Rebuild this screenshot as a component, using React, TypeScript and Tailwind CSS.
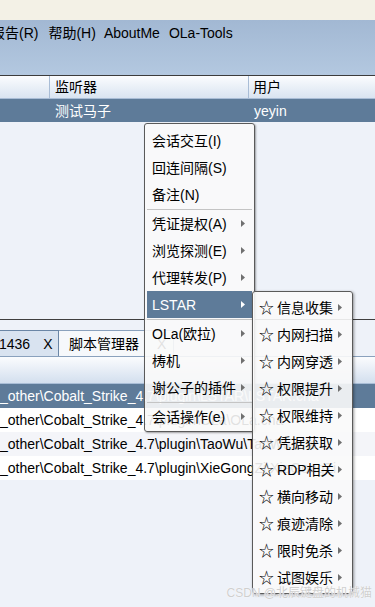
import React from "react";

const FONT = '"Liberation Sans", "Noto Sans CJK SC", sans-serif';

function Arrow({ white = false }: { white?: boolean }) {
  return (
    <svg width="4" height="7" viewBox="0 0 4 7" className="shrink-0">
      <path d="M0 0 L4 3.5 L0 7 Z" fill={white ? "#ffffff" : "#707070"} />
    </svg>
  );
}

type MainItem = { label: string; sub?: boolean; active?: boolean; sepBefore?: boolean };

const mainItems: MainItem[] = [
  { label: "会话交互(I)" },
  { label: "回连间隔(S)" },
  { label: "备注(N)" },
  { label: "凭证提权(A)", sub: true, sepBefore: true },
  { label: "浏览探测(E)", sub: true },
  { label: "代理转发(P)", sub: true },
  { label: "LSTAR", sub: true, active: true },
  { label: "OLa(欧拉)", sub: true, sepBefore: true },
  { label: "梼机", sub: true },
  { label: "谢公子的插件", sub: true },
  { label: "会话操作(e)", sub: true, sepBefore: true },
];

const subItems = [
  "信息收集",
  "内网扫描",
  "内网穿透",
  "权限提升",
  "权限维持",
  "凭据获取",
  "RDP相关",
  "横向移动",
  "痕迹清除",
  "限时免杀",
  "试图娱乐",
];

const rows = [
  "_other\\Cobalt_Strike_4.7\\plugin\\LSTAR\\LSTAR.cna",
  "_other\\Cobalt_Strike_4.7\\plugin\\OLa\\OLa.cna",
  "_other\\Cobalt_Strike_4.7\\plugin\\TaoWu\\TaoWu.cna",
  "_other\\Cobalt_Strike_4.7\\plugin\\XieGongZi\\XieGongZi.cna",
];

export default function App() {
  return (
    <div
      className="relative w-[375px] h-[607px] overflow-hidden bg-[#eef2f9] text-[14px] text-black"
      style={{ fontFamily: FONT }}
    >
      {/* top cream strip */}
      <div className="h-[20px] bg-[#f3f1e6]" />
      {/* menubar + toolbar */}
      <div className="h-[55px] bg-gradient-to-b from-[#a2b8d3] to-[#b3c8e0]">
        <div className="h-[26px] flex items-center -ml-[9px] leading-[20px] whitespace-nowrap">
          <span>报告(R)</span>
          <span className="ml-[10px]">帮助(H)</span>
          <span className="ml-[8px]">AboutMe</span>
          <span className="ml-[9px]">OLa-Tools</span>
        </div>
      </div>
      <div className="h-px bg-[#3c3c3c]" />
      {/* table header */}
      <div className="h-[23px] flex bg-gradient-to-b from-[#fbfcfe] to-[#d9e4f1] border-b border-[#a9bdd6] leading-[20px]">
        <div className="w-[50px] border-r border-[#a9bdd6]" />
        <div className="w-[199px] border-r border-[#a9bdd6] pl-[5px] flex items-center">监听器</div>
        <div className="flex-1 pl-[4px] flex items-center">用户</div>
      </div>
      {/* selected row */}
      <div className="h-[23px] flex bg-[#5e7b99] text-white leading-[20px]">
        <div className="w-[50px]" />
        <div className="w-[199px] pl-[5px] flex items-center">测试马子</div>
        <div className="flex-1 pl-[5px] flex items-center">yeyin</div>
      </div>
      {/* empty area */}
      <div className="h-[197px]" />
      <div className="h-px bg-[#3f3f3f]" />
      <div className="h-[10px]" />
      {/* tabs */}
      <div className="h-[27px] flex border-b border-[#8aa1bd] leading-[20px] whitespace-nowrap">
        <div className="w-[60px] flex items-center -ml-[1px] bg-[#d9e3f0] border-r border-t border-[#6b86a6]">
          <span>1436</span>
          <span className="ml-[13px]">X</span>
        </div>
        <div className="w-[115px] flex items-center pl-[10px] bg-[#f6f8fb] border-t border-r border-[#8aa1bd]">
          <span>脚本管理器</span>
          <span className="ml-[18px]">X</span>
        </div>
        <div className="flex-1" />
      </div>
      {/* second table header */}
      <div className="h-[27px] bg-gradient-to-b from-[#fbfcfe] to-[#d3dfee] border-b border-[#a9bdd6]" />
      {/* rows */}
      <div className="leading-[20px] whitespace-nowrap">
        {rows.map((r, i) => (
          <div
            key={i}
            className={
              "h-[24px] flex items-center " +
              (i === 0 ? "bg-[#5e7b99] text-white" : i === 2 ? "bg-[#f4f5f9]" : "bg-white")
            }
          >
            <div className="w-[340px] overflow-hidden">{r}</div>
          </div>
        ))}
      </div>

      {/* main popup menu */}
      <div className="absolute left-[144px] top-[123px] w-[111px] rounded-[3px] border border-[#5a5a5a] bg-[rgba(250,250,250,0.9)] pt-[3px] pb-[1px] px-[2px] shadow-[1px_1px_2px_rgba(0,0,0,0.35)] leading-[20px] whitespace-nowrap">
        {mainItems.map((it, i) => (
          <React.Fragment key={i}>
            {it.sepBefore && (
              <div className="h-[2px] flex flex-col justify-center">
                <div className="h-px bg-[#c4c4c4]" />
              </div>
            )}
            <div
              className={
                "h-[27px] flex items-center pl-[5px] pr-[7px] " +
                (it.active ? "bg-[#5e7b99] text-white" : "")
              }
            >
              <span className="flex-1">{it.label}</span>
              {it.sub && <Arrow white={it.active} />}
            </div>
          </React.Fragment>
        ))}
      </div>

      {/* submenu */}
      <div className="absolute left-[252px] top-[291px] w-[101px] rounded-[3px] border border-[#5a5a5a] bg-[rgba(250,250,250,0.9)] pt-[2px] pb-[2px] px-[2px] shadow-[1px_1px_3px_rgba(0,0,0,0.4)] leading-[20px] whitespace-nowrap">
        {subItems.map((s, i) => (
          <div key={i} className="h-[27px] flex items-center pl-[4px] pr-[8px]">
            <span className="flex-1">
              <span className="text-[15px]">☆</span>
              <span className="ml-[3px]">{s}</span>
            </span>
            <Arrow />
          </div>
        ))}
      </div>

      {/* watermark */}
      <div
        className="absolute right-[3px] bottom-[7px] text-[12px] leading-[14px] text-[#cfcfcf] whitespace-nowrap"
        style={{ textShadow: "0 0 1px #ffffff, 0 0 1px #ffffff" }}
      >
        CSDN @北辰键盘的机械猫
      </div>
    </div>
  );
}
